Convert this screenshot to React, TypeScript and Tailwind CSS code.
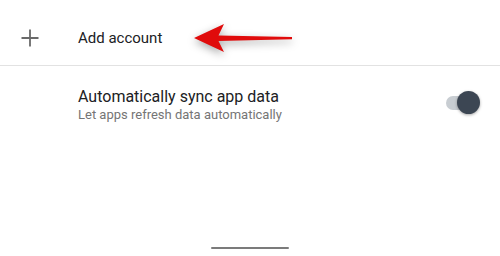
import React from "react";

function Arrow() {
  return (
    <svg
      className="absolute left-[180px] top-[10px]"
      width="125"
      height="58"
      viewBox="180 10 125 58"
      style={{ filter: "drop-shadow(0px 3px 4px rgba(0,0,0,0.35))" }}
    >
      <polygon
        points="194,38 224,24 218.5,35.5 292,37 292,39.2 218.5,41 224,52"
        fill="#e00b0b"
      />
    </svg>
  );
}

export default function App() {
  return (
    <div
      className="relative w-[500px] h-[256px] bg-white flex flex-col overflow-hidden"
      style={{ fontFamily: "Roboto, 'Noto Sans', sans-serif" }}
    >
      <div className="h-[65px] flex items-center pl-[21px] pt-[11px] shrink-0">
        <svg width="18" height="18" viewBox="0 0 18 18">
          <path d="M9 0.5V17.5M0.5 9H17.5" stroke="#6a6a6a" strokeWidth="1.8" />
        </svg>
        <span className="ml-[39px] text-[15px] text-[#202124] leading-none">
          Add account
        </span>
      </div>
      <Arrow />
      <div className="h-px bg-[#e2e2e2] shrink-0" />
      <div className="flex items-center pl-[78px] pr-[20px] pt-[21px]">
        <div className="flex-1 flex flex-col">
          <span className="text-[16px] leading-[19px] text-[#202124]">
            Automatically sync app data
          </span>
          <span className="text-[13px] leading-[17px] text-[#757575]">
            Let apps refresh data automatically
          </span>
        </div>
        <div className="relative w-[34px] h-[24px] mt-[-4px]">
          <div className="absolute left-0 top-[5px] w-[30px] h-[14px] rounded-full bg-[#c8cdd2]" />
          <div className="absolute right-0 top-0 w-[23px] h-[23px] rounded-full bg-[#3c4653] shadow-[0_1px_3px_rgba(0,0,0,0.35)]" />
        </div>
      </div>
      <div className="mt-auto mb-[7px] flex justify-center">
        <div className="w-[78px] h-[2px] bg-[#7b7b7b] rounded-full" />
      </div>
    </div>
  );
}
